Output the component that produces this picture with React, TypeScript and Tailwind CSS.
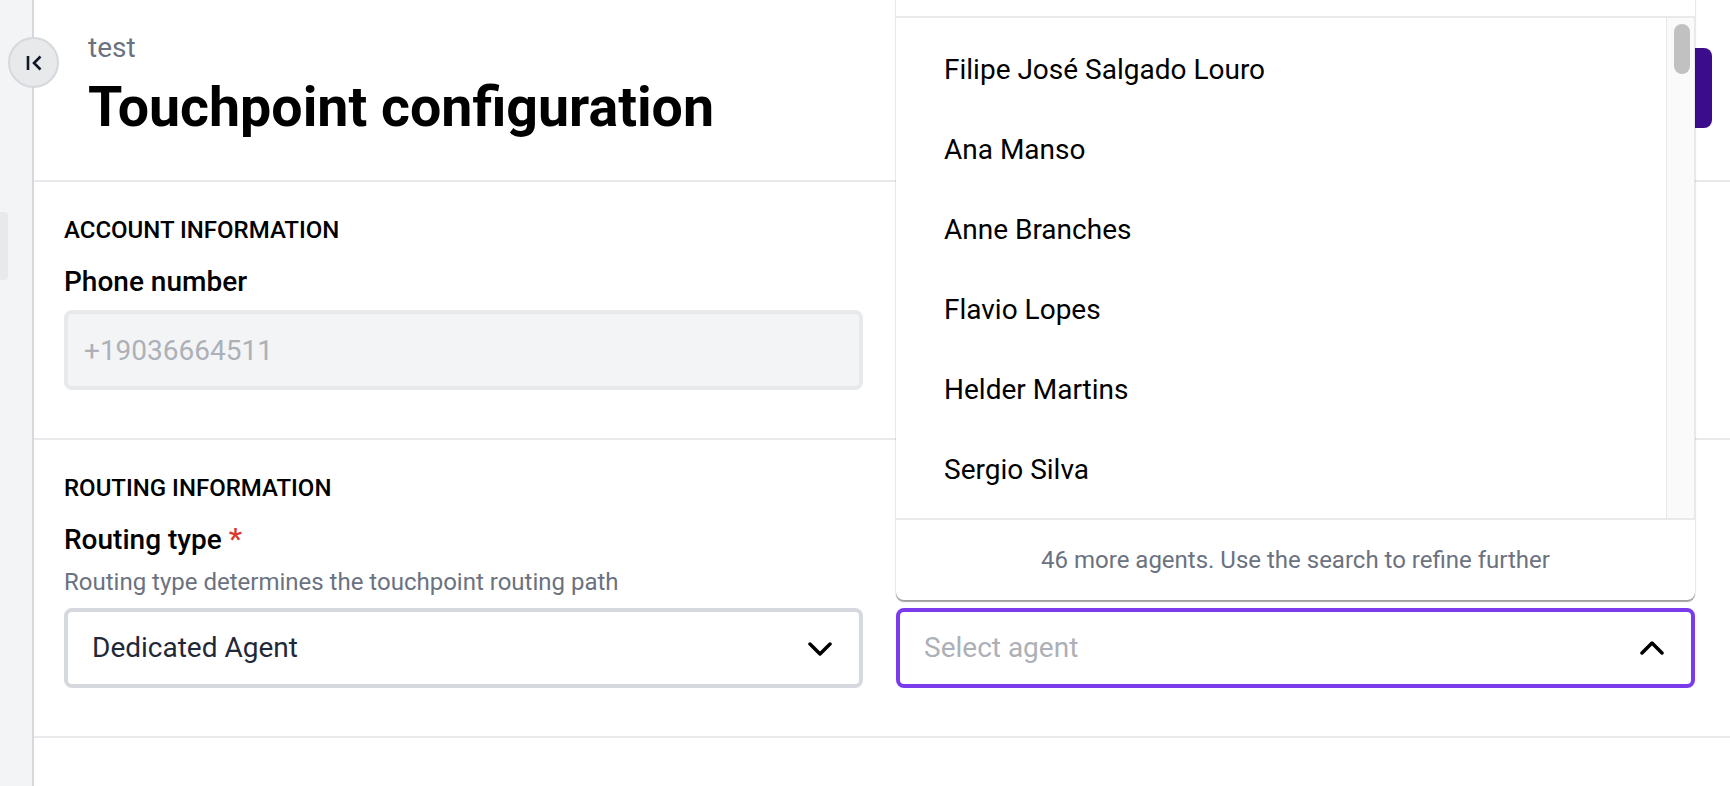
const agents = ["Filipe José Salgado Louro", "Ana Manso", "Anne Branches", "Flavio Lopes", "Helder Martins", "Sergio Silva"];

function Chevron({ up }: { up?: boolean }) {
  return (
    <svg width="24" height="24" viewBox="0 0 24 24" fill="none" stroke="#000" strokeWidth="3.5" strokeLinecap="round" strokeLinejoin="round">
      <path d={up ? "M2 17l10-10 10 10" : "M2 8l10 10 10-10"} />
    </svg>
  );
}

export default function App() {
  return (
    <div className="flex h-[786px] w-[1730px] overflow-hidden bg-white text-black font-['Roboto',sans-serif]">
      <aside className="relative w-[34px] shrink-0 bg-[#f3f4f6] border-r-2 border-[#d5d8dc]">
        <div className="absolute left-0 top-[212px] h-[68px] w-[8px] rounded-r bg-[#e8e9eb]" />
        <button className="absolute left-[8px] top-[37px] z-10 flex h-[51px] w-[51px] items-center justify-center rounded-full border-2 border-[#d5d8dc] bg-[#e8e9eb]">
          <svg width="18" height="18" viewBox="0 0 18 18" fill="none" stroke="#111827" strokeWidth="2.6" strokeLinejoin="miter">
            <path d="M3 2v14M15.500 2.500L9 9l6.500 6.500" />
          </svg>
        </button>
      </aside>
      <main className="relative min-w-0 flex-1">
        <header className="flex h-[182px] items-start justify-between border-b-2 border-[#e8e9eb] pl-[54px] pr-[18px]">
          <div className="pt-[32px]">
            <div className="text-[28px] leading-[32px] text-[#6b7280]">test</div>
            <h1 className="mt-[8px] text-[55.500px] font-bold leading-[72px]">Touchpoint configuration</h1>
          </div>
          <button className="mt-[48px] h-[80px] w-[180px] rounded-lg bg-[#3b0d8c]" />
        </header>
        <section className="h-[258px] border-b-2 border-[#e8e9eb] pl-[30px] pr-[35px] pt-[34px]">
          <h2 className="text-[24px] font-medium leading-[28px]">ACCOUNT INFORMATION</h2>
          <label className="mt-[20px] block text-[28px] font-medium leading-[36px]">Phone number</label>
          <div className="mt-[10px] grid grid-cols-2 gap-[33px]">
            <div className="flex h-[80px] items-center rounded-lg border-[4px] border-[#e8e9eb] bg-[#f3f4f6] px-[16px] pt-[1px] text-[28px] text-[#adb0b6]">+19036664511</div>
          </div>
        </section>
        <section className="h-[298px] border-b-2 border-[#e8e9eb] pl-[30px] pr-[35px] pt-[34px]">
          <h2 className="text-[24px] font-medium leading-[28px]">ROUTING INFORMATION</h2>
          <label className="mt-[20px] block text-[28px] font-medium leading-[36px]">Routing type <span className="text-[30px] leading-none text-[#d9392b]">*</span></label>
          <p className="mt-[10px] text-[24px] leading-[28px] text-[#6b7280]">Routing type determines the touchpoint routing path</p>
          <div className="mt-[12px] grid grid-cols-2 gap-[33px]">
            <div className="flex h-[80px] items-center justify-between rounded-lg border-[4px] border-[#d5d8dc] bg-white pl-[24px] pr-[27px] text-[28px] text-[#1f2937]">
              <span>Dedicated Agent</span>
              <Chevron />
            </div>
            <div className="flex h-[80px] items-center justify-between rounded-lg border-[4px] border-[#7c3aed] bg-white pl-[24px] pr-[27px] text-[28px] text-[#adb0b6]">
              <span>Select agent</span>
              <Chevron up />
            </div>
          </div>
        </section>
        <div className="absolute left-[862px] top-[-40px] z-20 flex h-[640px] w-[799px] flex-col rounded-lg bg-white shadow-[0_2px_1px_rgba(0,0,0,0.35),0_0_2px_rgba(0,0,0,0.2)]">
          <div className="h-[58px] shrink-0 border-b-2 border-[#e8e9eb]" />
          <div className="flex min-h-0 flex-1">
            <ul className="min-w-0 flex-1 overflow-hidden pt-[12px]">
              {agents.map((a) => (
                <li key={a} className="flex h-[80px] items-center pl-[48px] text-[28px] leading-[36px]">{a}</li>
              ))}
            </ul>
            <div className="w-[29px] shrink-0 border-x border-[#e8e9eb] bg-[#fafafa] pl-[7px] pt-[6px]">
              <div className="h-[50px] w-[16px] rounded-full bg-[#c1c1c1]" />
            </div>
          </div>
          <div className="flex h-[82px] shrink-0 items-center justify-center border-t-2 border-[#e8e9eb] text-[24px] text-[#6b7280]">46 more agents. Use the search to refine further</div>
        </div>
      </main>
    </div>
  );
}
